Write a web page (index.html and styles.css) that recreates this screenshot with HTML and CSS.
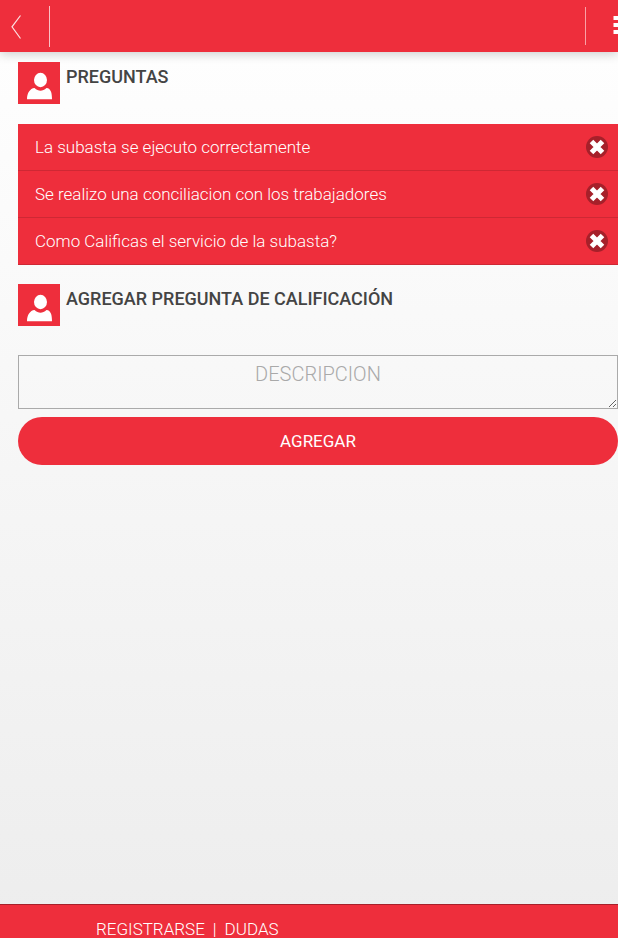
FILE: index.html
```html
<!DOCTYPE html>
<html lang="es">
<head>
<meta charset="utf-8">
<title>Preguntas</title>
<link rel="stylesheet" href="styles.css">
</head>
<body>
<header class="topbar">
  <button class="bar-button back" type="button" aria-label="Volver">
    <svg width="12" height="26" viewBox="0 0 12 26"><path d="M10.500 1.500 2 12.800 10.500 24.500" fill="none" stroke="#fff" stroke-opacity=".85" stroke-width="1.200"/></svg>
  </button>
  <button class="bar-button menu" type="button" aria-label="Menú">
    <svg width="5" height="20" viewBox="0 0 5 20"><path d="M.5 0H5v4H.5zM.5 7H5v4H.5zM.5 14H5v4H.5z" fill="#fff"/></svg>
  </button>
</header>
<main class="content">
  <div class="heading">
    <svg class="avatar" viewBox="0 0 42 42"><path d="M0 0h42v42H0z" fill="#ee2e3c"/><ellipse cx="22.500" cy="18" rx="6.500" ry="7.200" fill="#fff"/><path d="M9 37.300C9 31 12 26.500 16.500 26c4 3.500 8 3.500 12 0 4.500.5 5.500 5 5.500 11.300z" fill="#fff"/></svg>
    <h1>PREGUNTAS</h1>
  </div>
  <ul class="questions">
    <li><span>La subasta se ejecuto correctamente</span>
      <button class="remove" type="button" aria-label="Eliminar"><svg width="22" height="22" viewBox="0 0 22 22"><circle cx="11" cy="11" r="11" fill="#a6202a"/><path d="m5.500 5.500 11 11M16.500 5.500l-11 11" stroke="#fff" stroke-width="5"/></svg></button></li>
    <li><span>Se realizo una conciliacion con los trabajadores</span>
      <button class="remove" type="button" aria-label="Eliminar"><svg width="22" height="22" viewBox="0 0 22 22"><circle cx="11" cy="11" r="11" fill="#a6202a"/><path d="m5.500 5.500 11 11M16.500 5.500l-11 11" stroke="#fff" stroke-width="5"/></svg></button></li>
    <li><span>Como Calificas el servicio de la subasta?</span>
      <button class="remove" type="button" aria-label="Eliminar"><svg width="22" height="22" viewBox="0 0 22 22"><circle cx="11" cy="11" r="11" fill="#a6202a"/><path d="m5.500 5.500 11 11M16.500 5.500l-11 11" stroke="#fff" stroke-width="5"/></svg></button></li>
  </ul>
  <div class="heading">
    <svg class="avatar" viewBox="0 0 42 42"><path d="M0 0h42v42H0z" fill="#ee2e3c"/><ellipse cx="22.500" cy="18" rx="6.500" ry="7.200" fill="#fff"/><path d="M9 37.300C9 31 12 26.500 16.500 26c4 3.500 8 3.500 12 0 4.500.5 5.500 5 5.500 11.300z" fill="#fff"/></svg>
    <h2>AGREGAR PREGUNTA DE CALIFICACIÓN</h2>
  </div>
  <form class="form">
    <textarea aria-label="Descripcion" placeholder="DESCRIPCION"></textarea>
    <button class="submit" type="button">AGREGAR</button>
  </form>
</main>
<footer class="footer">
  <a href="#">REGISTRARSE</a><span>|</span><a href="#">DUDAS</a>
</footer>
</body>
</html>
```
FILE: styles.css
```css
* { box-sizing: border-box; }
body {
  margin: 0;
  min-height: 100vh;
  display: flex;
  flex-direction: column;
  font-family: Roboto, "Liberation Sans", sans-serif;
  font-weight: 300;
  font-size: 17px;
  color: #444;
  background: linear-gradient(#fff, #ededed);
}
button { border: 0; padding: 0; font: inherit; color: inherit; background: none; }
svg { display: block; }
.topbar {
  display: flex;
  justify-content: space-between;
  height: 52px;
  padding: 6px 0 5px;
  background: #ee2e3c;
  box-shadow: 0 2px 10px rgba(0, 0, 0, 0.2);
}
.bar-button { display: flex; align-items: center; }
.back { padding-left: 10px; width: 50px; border-right: 1px solid #fbc0c4; }
.menu { width: 33px; height: 38px; margin-top: 1px; justify-content: flex-end; border-left: 1px solid #f9a0a6; }
.content { flex: 1; padding: 10px 0 0 18px; }
.heading { display: flex; gap: 6px; height: 42px; }
.avatar { width: 42px; height: 42px; }
h1, h2 { margin: 4px 0 0; font-size: 18px; line-height: 21px; font-weight: 500; }
.questions { list-style: none; margin: 20px 0 19px; padding: 0; background: #ee2e3c; color: #fff; }
.questions li {
  display: flex;
  align-items: center;
  justify-content: space-between;
  height: 47px;
  padding: 0 10px 0 17px;
  border-bottom: 1px solid #ce2834;
}
.form { display: flex; flex-direction: column; gap: 8px; margin-top: 29px; }
textarea {
  height: 54px;
  min-width: 100%;
  padding: 6px 0;
  border: 1px solid #aaa;
  background: transparent;
  font: inherit;
  font-size: 20px;
  line-height: 24px;
  text-align: center;
  resize: both;
}
textarea::placeholder { color: #a9a9a9; }
.submit { height: 48px; border-radius: 24px; background: #ee2e3c; color: #fff; font-size: 17px; font-weight: 400; }
.footer {
  display: flex;
  gap: 8px;
  height: 34px;
  padding: 14px 0 0 96px;
  border-top: 1px solid #a6202a;
  background: #ee2e3c;
  color: #fff;
  line-height: 20px;
}
.footer a { color: inherit; text-decoration: none; }
```
